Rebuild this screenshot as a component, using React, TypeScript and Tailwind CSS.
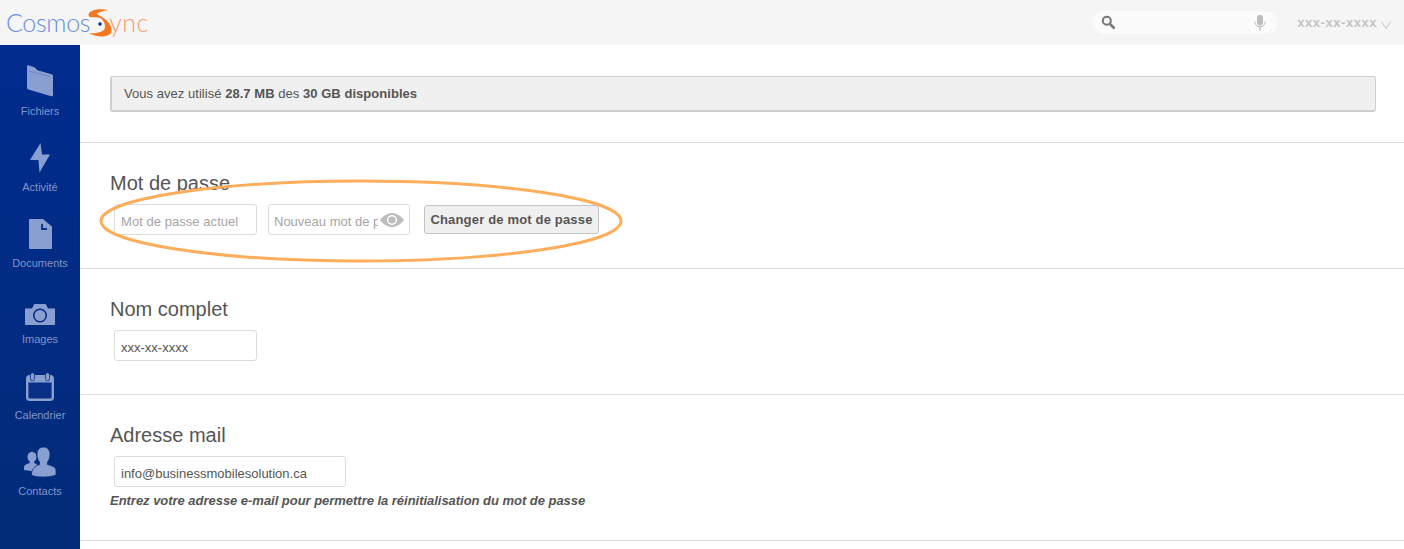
const sans = "font-['Liberation_Sans',Arial,sans-serif]";

const navItems = [
  {
    label: 'Fichiers',
    icon: (
      <svg width="28" height="32" viewBox="0 0 28 32" className="fill-[#8a9fd1]">
        <path d="M1 1.5 C1 .5 2 0 3 .4 L8.5 2.2 L11.5 5.2 L25.5 9.2 C26.6 9.5 27 10.2 27 11 L27 30 C27 31 26.2 31.6 25.2 31.2 L2.5 24.6 C1.5 24.3 1 23.6 1 22.8 Z" />
        <path d="M3 6.2 L24 11.6" className="stroke-[#5f7dbe]" strokeWidth="0.8" fill="none" />
      </svg>
    ),
  },
  {
    label: 'Activité',
    icon: (
      <svg width="22" height="30" viewBox="0 0 22 30" className="fill-[#8a9fd1]">
        <path d="M11.5 0 L1 17 L9.5 17 L10.5 29.5 L21 11.5 L13 11.5 Z" />
      </svg>
    ),
  },
  {
    label: 'Documents',
    icon: (
      <svg width="23" height="30" viewBox="0 0 23 30" className="fill-[#8a9fd1]">
        <path d="M1 0 L14 0 L23 7.5 L23 29 C23 29.6 22.6 30 22 30 L1 30 C.4 30 0 29.6 0 29 L0 1 C0 .4 .4 0 1 0 Z" />
        <path d="M13 5 L13 10 L18 10" className="stroke-[#0a2f86]" strokeWidth="1.8" fill="none" />
      </svg>
    ),
  },
  {
    label: 'Images',
    icon: (
      <svg width="30" height="21" viewBox="0 0 30 21" className="fill-[#8a9fd1]">
        <path fillRule="evenodd" d="M0 4.5 L7 4.5 L9 .5 C9.2 .2 9.5 0 10 0 L20 0 C20.5 0 20.8 .2 21 .5 L23 4.5 L30 4.5 L30 20 C30 20.6 29.6 21 29 21 L1 21 C.4 21 0 20.6 0 20 Z M15 4.5 A7 7 0 1 0 15 18.5 A7 7 0 1 0 15 4.5 Z M15 6 A5.5 5.5 0 1 1 15 17 A5.5 5.5 0 1 1 15 6 Z" />
      </svg>
    ),
  },
  {
    label: 'Calendrier',
    icon: (
      <svg width="28" height="29" viewBox="0 0 28 29">
        <rect x="1.2" y="4.2" width="25.6" height="23.6" rx="2.5" className="fill-[#0a2f86] stroke-[#8a9fd1]" strokeWidth="2.4" />
        <rect x="1" y="4" width="26" height="6.5" className="fill-[#8a9fd1]" />
        <rect x="4.5" y="0.8" width="4" height="8" rx="2" className="fill-[#8a9fd1] stroke-[#0a2f86]" strokeWidth="0.8" />
        <rect x="19.5" y="0.8" width="4" height="8" rx="2" className="fill-[#8a9fd1] stroke-[#0a2f86]" strokeWidth="0.8" />
      </svg>
    ),
  },
  {
    label: 'Contacts',
    icon: (
      <svg width="32" height="30" viewBox="0 0 32 30" className="fill-[#8a9fd1]">
        <ellipse cx="8" cy="10" rx="4.5" ry="5.2" />
        <path d="M5.8 14 L10.2 14 L10.2 16 C13 17 14 18 14 20 L14 25 L0 23 L0 20.5 C0 18 2.5 17 5.8 16 Z" />
        <path
          d="M19.5 0 C23.5 0 26 3 26 7.5 C26 11 24.7 13.5 23.5 15 L23.5 17.5 C29 19 32 20.5 32 23.5 L32 28 C28 29.5 24 30 19 30 C14 30 10 29.5 7.5 28 C7.5 22.5 10 19.5 15.5 17.5 L15.5 15 C14.3 13.5 13 11 13 7.5 C13 3 15.5 0 19.5 0 Z"
          className="stroke-[#0a2c80]"
          strokeWidth="0.8"
        />
      </svg>
    ),
  },
];

function Logo() {
  return (
    <div className="flex items-center pl-[6px] font-['Lato',sans-serif] font-light text-[25px] leading-none">
      <span className="text-[#6a90dc] tracking-[-0.3px]">Cosmos</span>
      <svg width="24" height="28" viewBox="0 0 24 28" className="-ml-[2px] -mr-[3px]">
        <path d="M20 1 C12 -1 0 1 .5 6 C1 10 8 7 12 9 C16 11 17 15 17 18 C17 23 8 25 1 24 C7 28 20 29 23 24 C25 20 22 14 17 10 C13 7 8 5 9 4.5 C11 3 16 2 20 1 Z" className="fill-[#f4761f]" />
        <circle cx="12" cy="15" r="1.8" className="fill-[#0b2f8f]" />
      </svg>
      <span className="text-[#f79a78] tracking-[0.5px]">ync</span>
    </div>
  );
}

function TextField({ placeholder, value, width }: { placeholder?: string; value?: string; width: string }) {
  return (
    <div className={`h-[31px] ${width} ml-1 flex items-center pt-[5px] px-[6px] bg-white border border-[#dcdcdc] rounded-[3px] text-[13px] whitespace-nowrap ${value ? 'text-[#555]' : 'text-[#a5a5a5] tracking-[0.05px]'}`}>
      <span className="block overflow-hidden">{value ?? placeholder}</span>
    </div>
  );
}

export default function App() {
  return (
    <div className={`relative h-[549px] w-[1404px] overflow-hidden bg-white ${sans} text-[#555]`}>
      <header className="h-[45px] flex items-center justify-between bg-[#f5f5f5]">
        <Logo />
        <div className="flex items-center pr-[13px]">
          <div className="w-[185px] h-[23px] rounded-full bg-[#fbfbfb] flex items-center justify-between pl-[9px] pr-[11px]">
            <svg width="15" height="15" viewBox="0 0 15 15" fill="none" className="stroke-[#777]">
              <circle cx="5.8" cy="5.8" r="4" strokeWidth="2" />
              <path d="M9 9 L13.5 13.5" strokeWidth="2.6" />
            </svg>
            <svg width="12" height="16" viewBox="0 0 12 16" className="fill-[#bdbdbd]">
              <rect x="3" y="0" width="6" height="10.5" rx="3" />
              <path d="M1 6.5 L1 7.5 C1 10 3 11.8 6 11.8 C9 11.8 11 10 11 7.5 L11 6.5" fill="none" stroke="#bdbdbd" />
              <rect x="5.4" y="11.5" width="1.2" height="4.5" />
            </svg>
          </div>
          <span className="ml-[20px] mt-[1px] text-[13px] font-bold text-[#c4c4c4] tracking-[0.55px]">xxx-xx-xxxx</span>
          <svg width="10" height="8" viewBox="0 0 10 8" fill="none" className="ml-[4px] mt-[4px] stroke-[#c4c4c4]">
            <path d="M.5 .5 L5 7.5 L9.5 .5" />
          </svg>
        </div>
      </header>

      <div className="flex h-[504px]">
        <nav className="w-20 shrink-0 bg-gradient-to-b from-[#012b8e] to-[#022c78] flex flex-col items-center">
          {navItems.map((item) => (
            <div key={item.label} className="h-[76px] w-full flex flex-col items-center">
              <div className="h-[56px] pb-[4px] flex items-end justify-center">{item.icon}</div>
              <div className="mt-[3px] text-[11px] leading-[14px] text-[#8095c9]">{item.label}</div>
            </div>
          ))}
        </nav>

        <main className="flex-1 min-w-0">
          <section className="h-[98px] border-b border-[#dfdfdf] pt-[31px] pl-[30px] pr-[28px]">
            <div className="h-[36px] flex items-center pt-[1px] pl-[12px] bg-[#f0f0f0] border border-[#cfcfcf] border-l-2 border-b-2 rounded-[3px] text-[13px] tracking-[0.04px]">
              <span>
                Vous avez utilisé <b>28.7 MB</b> des <b>30 GB disponibles</b>
              </span>
            </div>
          </section>

          <section className="h-[126px] border-b border-[#dfdfdf] pl-[30px] pt-[28px]">
            <h2 className="text-[20px] leading-[24px]">Mot de passe</h2>
            <div className="flex items-center mt-[9px]">
              <TextField placeholder="Mot de passe actuel" width="w-[143px]" />
              <div className="relative ml-[7px]">
                <div className="h-[31px] w-[142px] ml-1 flex items-center pt-[5px] pl-[5px] pr-[31px] bg-white border border-[#dcdcdc] rounded-[3px] text-[13px] whitespace-nowrap text-[#a5a5a5]">
                  <span className="block overflow-hidden">Nouveau mot de passe</span>
                </div>
                <svg width="24" height="14" viewBox="0 0 24 14" className="absolute right-[6px] top-[9px]">
                  <path d="M0 7 C4 2 8 0 12 0 C16 0 20 2 24 7 C20 12 16 14 12 14 C8 14 4 12 0 7 Z" className="fill-[#bdbdbd]" />
                  <circle cx="12" cy="7" r="5" className="fill-white" />
                  <circle cx="12" cy="7" r="3.6" className="fill-[#bdbdbd]" />
                </svg>
              </div>
              <button className="ml-[14px] h-[29px] w-[175px] bg-[#f0f0f0] border border-[#c4c4c4] rounded-[3px] text-[13px] font-bold tracking-[0.17px] text-[#555]">
                Changer de mot de passe
              </button>
            </div>
          </section>

          <section className="h-[126px] border-b border-[#dfdfdf] pl-[30px] pt-[28px]">
            <h2 className="text-[20px] leading-[24px]">Nom complet</h2>
            <div className="mt-[9px]">
              <TextField value="xxx-xx-xxxx" width="w-[143px]" />
            </div>
          </section>

          <section className="h-[146px] border-b border-[#dfdfdf] pl-[30px] pt-[28px]">
            <h2 className="text-[20px] leading-[24px]">Adresse mail</h2>
            <div className="mt-[9px]">
              <TextField value="info@businessmobilesolution.ca" width="w-[232px]" />
            </div>
            <p className="mt-[6px] text-[13px] leading-[16px] font-bold italic tracking-[-0.03px]">
              Entrez votre adresse e-mail pour permettre la réinitialisation du mot de passe
            </p>
          </section>
        </main>
      </div>

      {/* annotation drawn over the page */}
      <svg width="530" height="90" viewBox="0 0 530 90" fill="none" className="absolute left-[96px] top-[176px] pointer-events-none">
        <ellipse cx="265" cy="45" rx="260" ry="40" stroke="#fdae5c" strokeWidth="3" />
      </svg>
    </div>
  );
}
